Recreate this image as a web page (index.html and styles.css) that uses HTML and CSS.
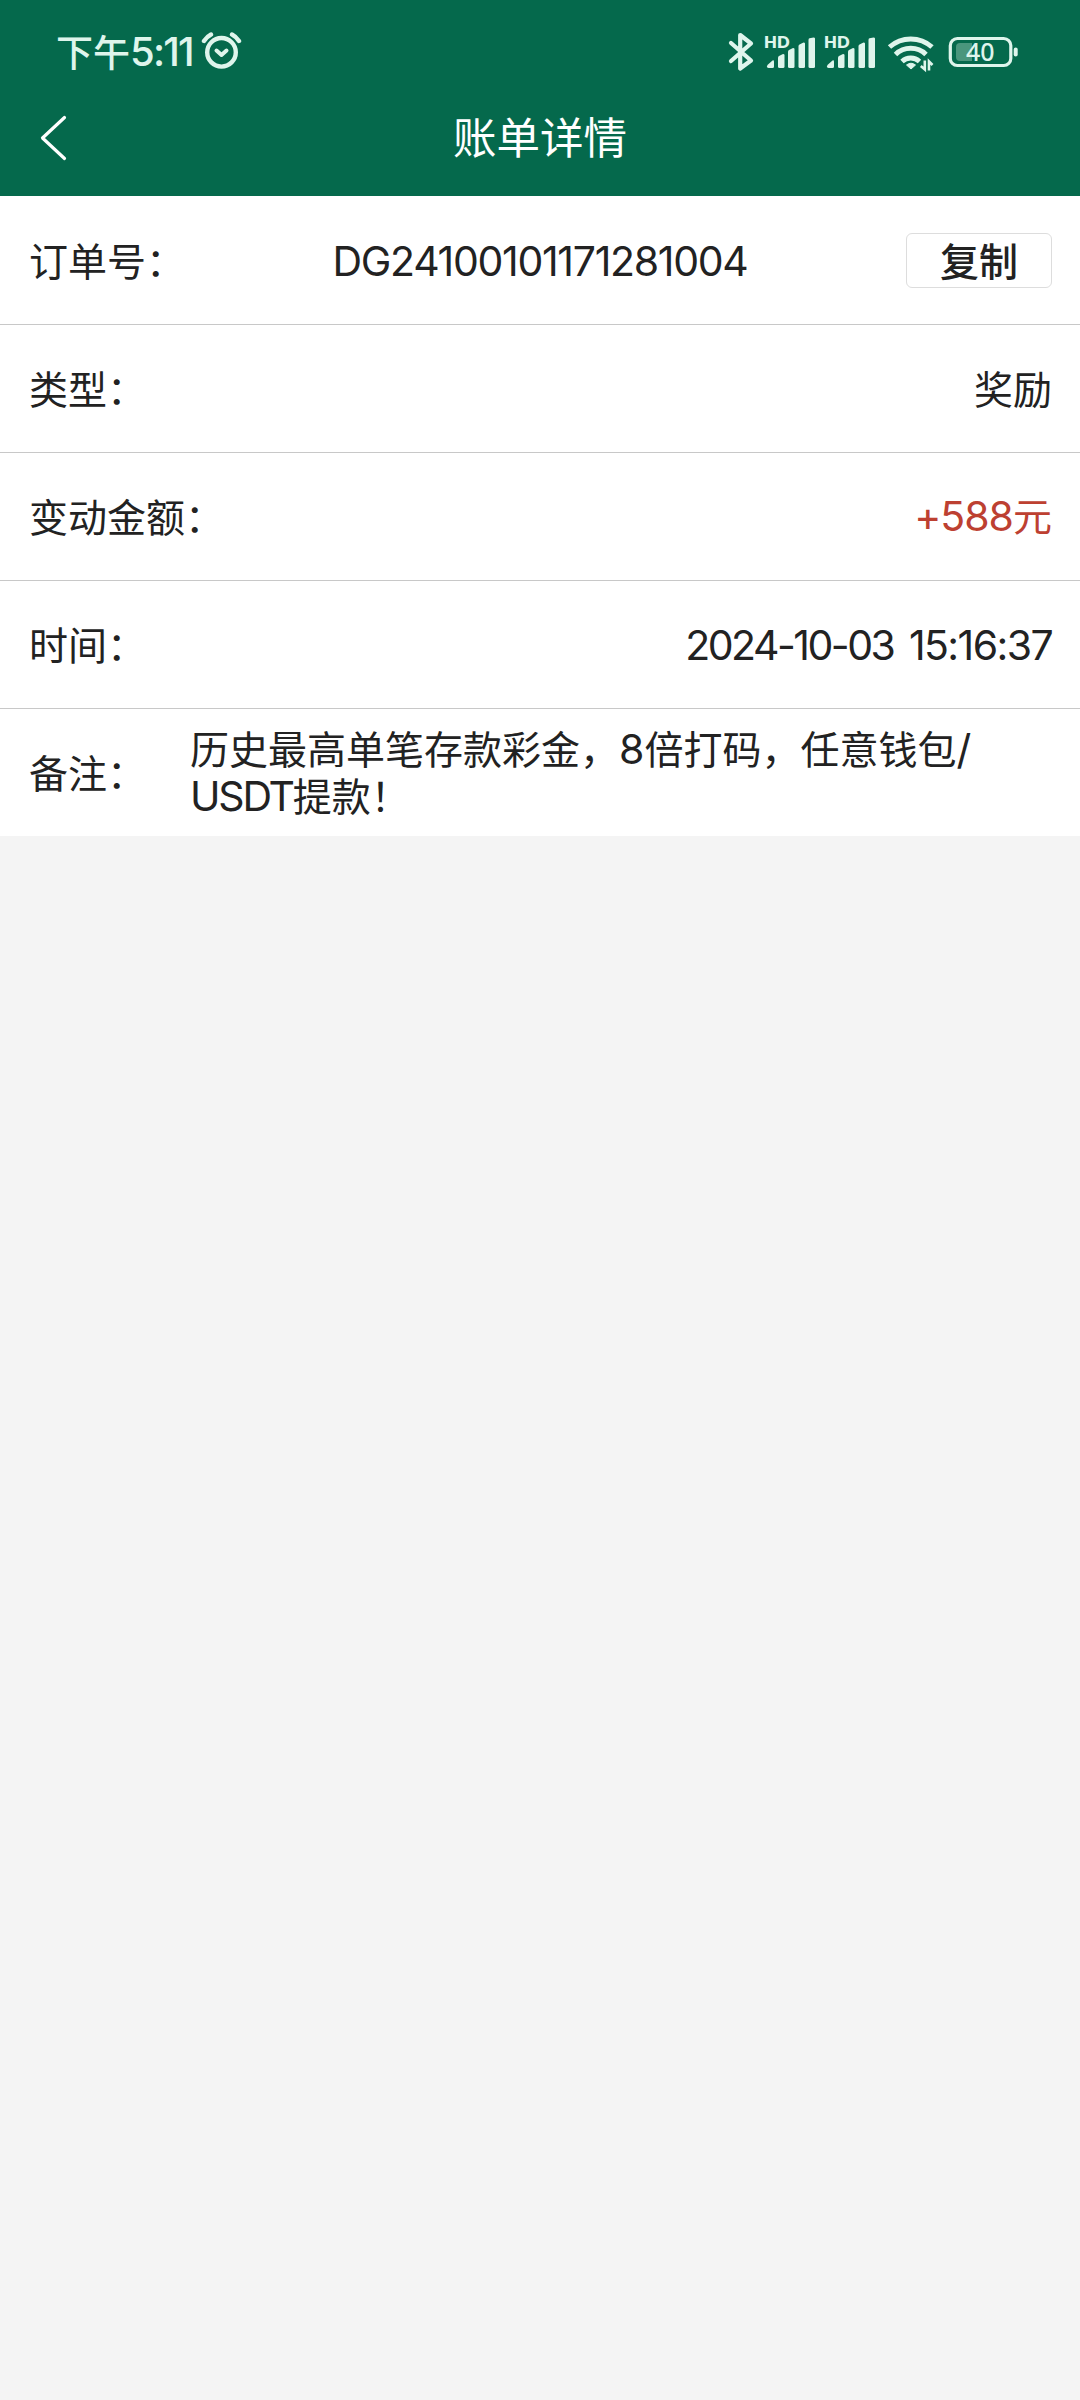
FILE: index.html
```html
<!DOCTYPE html>
<html lang="zh-CN">
<head>
<meta charset="utf-8">
<title>账单详情</title>
<link rel="stylesheet" href="styles.css">
</head>
<body>
<header class="header">
  <div class="status">
    <div class="status-left">
      <span class="time"><span class="period">下午</span><span class="clock">5:11</span></span>
      <svg class="alarm" width="42" height="40" viewBox="200 33 42 40" fill="none" stroke="currentColor" stroke-linecap="round" stroke-linejoin="round">
        <circle cx="221.5" cy="53.3" r="14.3" stroke-width="4.4"/>
        <path d="M216.500 51.500l5 4.400 5-4.400" stroke-width="4"/>
        <path d="M204 42q3-4.500 7-6.500M239 42q-3-4.500-7-6.500" stroke-width="4.400"/>
      </svg>
    </div>
    <svg class="indicators" width="292" height="44" viewBox="727 30 292 44" fill="none" stroke="currentColor">
      <path d="M731 43L751 60.500 740.200 68.500V35L751 43.500 731 61" stroke-width="4.200" stroke-linecap="round" stroke-linejoin="round"/>
      <g id="sim" fill="currentColor" stroke="none">
        <text class="hd" x="764" y="47.800" textLength="25.500" lengthAdjust="spacingAndGlyphs">HD</text>
        <path d="M768 64.500l4.500-4q1.500-.7 1.500 1V66.500q0 1.500-1.500 1.500h-4q-3-.5-.5-3.500z"/>
        <path d="M778 57.500q0-1 1-1.500l4-2q1.500 0 1.500 1V66.500q0 1.500-1.500 1.500h-3.500q-1.500 0-1.500-1.500z"/>
        <path d="M788 51.500q0-1 1-1.500l4-2q1.500 0 1.500 1V66.500q0 1.500-1.500 1.500h-3.500q-1.500 0-1.500-1.500z"/>
        <path d="M798.500 46q0-1 1-1.500l4-2q1.500 0 1.500 1V66.500q0 1.500-1.500 1.500h-3.500q-1.500 0-1.500-1.500z"/>
        <path d="M808.500 40q0-1.500 1-1.800l4-.7q1.500 0 1.500 1V66.500q0 1.500-1.500 1.500h-3.500q-1.500 0-1.500-1.500z"/>
      </g>
      <use href="#sim" x="60"/>
      <path d="M889.500 47a32 32 0 0 1 42.500 0M895.500 54.500a22 22 0 0 1 30.500 0M902 61.500a13 13 0 0 1 17.500 0" stroke-width="5"/>
      <path d="M906.500 65q4.500-3.500 9 0l-4.500 4z" fill="currentColor" stroke-width="1"/>
      <path d="M924.800 60.500v9l-4-3.500M929 70.500V61.500l3.500 3.500" stroke-width="2.600"/>
      <rect x="950.300" y="38.500" width="60.500" height="27" rx="7" stroke-width="3.200"/>
      <path d="M960 43h12v18h-12q-4 0-4-4v-10q0-4 4-4z" fill="#4a967d" stroke="none"/>
      <path d="M1015.700 49.500v5" stroke-width="4" stroke-linecap="round"/>
      <text class="battery" x="966" y="61" textLength="28.500" lengthAdjust="spacingAndGlyphs">40</text>
    </svg>
  </div>
  <div class="navbar">
    <svg class="back" width="30" height="48" viewBox="39 114 30 48" fill="none" stroke="currentColor" stroke-width="3.200" stroke-linecap="round" stroke-linejoin="round"><path d="M64.500 117.500L42.500 138l22 20.500"/></svg>
    <h1 class="title">账单详情</h1>
    <span class="spacer"></span>
  </div>
</header>
<main class="details">
  <div class="row"><span class="label">订单号：</span><span class="order latin">DG24100101171281004</span><button class="copy">复制</button></div>
  <div class="row"><span class="label">类型：</span><span class="value">奖励</span></div>
  <div class="row"><span class="label">变动金额：</span><span class="value amount"><span class="latin money">+588</span>元</span></div>
  <div class="row"><span class="label">时间：</span><span class="latin datetime"><span class="date">2024-10-03</span> <span class="hours">15:16:37</span></span></div>
  <div class="row"><span class="label">备注：</span><p class="note">历史最高单笔存款彩金，<span class="latin">8</span>倍打码，任意钱包<span class="latin">/</span><br><span class="latin usdt">USDT</span>提款！</p></div>
</main>
</body>
</html>
```

FILE: styles.css
```css
* { box-sizing: border-box; }
body {
  margin: 0;
  min-height: 2400px;
  background: #f4f4f4;
  color: #222;
  font-family: "Noto Sans CJK SC", sans-serif;
  font-size: 39px;
}
.header { height: 196px; background: #05694c; color: #fff; }
.status {
  height: 104px;
  padding: 0 61px 0 56px;
  display: flex;
  align-items: center;
  justify-content: space-between;
  color: #dff5ec;
}
.status-left { display: flex; align-items: center; gap: 7px; }
.time {
  width: 137px;
  display: flex;
  align-items: center;
  font-size: 37px;
  font-weight: 500;
  line-height: 44px;
  white-space: nowrap;
}
.period { padding-bottom: 2px; }
.clock { font-family: Inter, sans-serif; font-size: 40px; letter-spacing: -1.8px; }
.hd { font: 800 17px Lato, sans-serif; }
.battery { font: 500 25px "Noto Sans", sans-serif; fill: currentColor; stroke: none; }
.navbar { height: 68px; padding: 0 39px; display: flex; align-items: center; justify-content: space-between; }
.back, .spacer { width: 30px; }
.title { margin: 0; padding-bottom: 4px; font-size: 43.5px; line-height: 60px; font-weight: 400; }
.details { background: #fff; }
.row {
  height: 128px;
  padding: 0 28px 0 29px;
  display: flex;
  align-items: center;
  justify-content: space-between;
  line-height: 46px;
}
.row + .row { box-shadow: inset 0 1px 0 #c8c8c8; }
.label, .value { padding-bottom: 3px; }
.latin { font-family: Inter, "Noto Sans CJK SC", sans-serif; font-size: 41px; line-height: 44px; }
.order { padding-top: 2px; margin-right: 11px; letter-spacing: -1.3px; }
.money { letter-spacing: -1px; }
.datetime { padding-top: 2px; }
.date { letter-spacing: -2.5px; margin-right: 4px; }
.hours { letter-spacing: -1.6px; }
.usdt { letter-spacing: -2.2px; }
.copy {
  width: 146px;
  height: 55px;
  padding: 0 0 3px;
  border: 1px solid #ddd;
  border-radius: 6px;
  background: #fff;
  color: #222;
  font: 500 39px/50px "Noto Sans CJK SC", sans-serif;
}
.amount { color: #bd4031; }
.note { width: 862px; margin: 0; padding-bottom: 3px; }
```
